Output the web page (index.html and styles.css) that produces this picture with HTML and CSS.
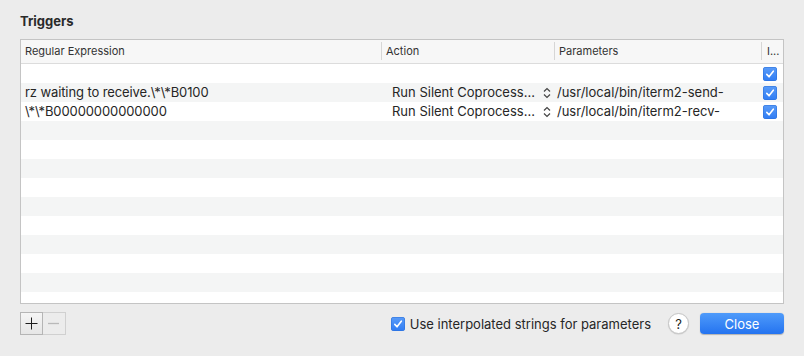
FILE: index.html
```html
<html><head><title>Triggers</title>
<link rel="stylesheet" href="styles.css">
</head>
<body>
  <div class="panel">
    <h1 class="title">Triggers</h1>
    <div class="table">
      <div class="head">
        <div class="cell c-regex">Regular Expression</div>
        <div class="cell c-action">Action</div>
        <div class="cell c-params">Parameters</div>
        <div class="cell c-inst">I...</div>
      </div>
      <div class="rows">
        <div class="row">
          <div class="cell c-regex"></div>
          <div class="cell c-action"></div>
          <div class="cell c-params"></div>
          <div class="cell c-inst"><span class="check"><svg viewBox="0 0 14 14"><path d="M3.8 7.4 L6 9.8 L10.3 4.2" /></svg></span></div>
        </div>
        <div class="row">
          <div class="cell c-regex">rz waiting to receive.\*\*B0100</div>
          <div class="cell c-action"><span class="pop">Run Silent Coprocess...</span><svg class="updown" viewBox="0 0 8 12"><path d="M1 4.5 L4 1.5 L7 4.5 M1 7.5 L4 10.5 L7 7.5" /></svg></div>
          <div class="cell c-params">/usr/local/bin/iterm2-send-</div>
          <div class="cell c-inst"><span class="check"><svg viewBox="0 0 14 14"><path d="M3.8 7.4 L6 9.8 L10.3 4.2" /></svg></span></div>
        </div>
        <div class="row">
          <div class="cell c-regex">\*\*B00000000000000</div>
          <div class="cell c-action"><span class="pop">Run Silent Coprocess...</span><svg class="updown" viewBox="0 0 8 12"><path d="M1 4.5 L4 1.5 L7 4.5 M1 7.5 L4 10.5 L7 7.5" /></svg></div>
          <div class="cell c-params">/usr/local/bin/iterm2-recv-</div>
          <div class="cell c-inst"><span class="check"><svg viewBox="0 0 14 14"><path d="M3.8 7.4 L6 9.8 L10.3 4.2" /></svg></span></div>
        </div>
      </div>
    </div>
    <div class="footer">
      <div class="segs">
        <button class="seg add" aria-label="Add"><svg viewBox="0 0 21 21"><path d="M4.5 10.5 H16.5 M10.5 4.5 V16.5" /></svg></button>
        <button class="seg remove" aria-label="Remove"><svg viewBox="0 0 21 21"><path d="M5 10.5 H16" /></svg></button>
      </div>
      <label class="option">
        <span class="check"><svg viewBox="0 0 14 14"><path d="M3.8 7.4 L6 9.8 L10.3 4.2" /></svg></span>
        Use interpolated strings for parameters
      </label>
      <button class="help">?</button>
      <button class="close">Close</button>
    </div>
  </div>
</body>
</html>
```

FILE: styles.css
```css
body, html {
  margin: 0;
  padding: 0;
  background: #ececec;
  font-family: Inter, Roboto, sans-serif;
  color: #262626;
  height: 100%;
  overflow: hidden;
}
.panel {
  padding: 12px 20px 0 20px;
}
.title {
  margin: 0;
  font-size: 13px;
  font-weight: 700;
  line-height: 18px;
  height: 27px;
  color: #2a2a2a;
}
.table {
  border: 1px solid #c4c4c4;
  background: #fff;
  height: 263px;
  overflow: hidden;
}
.head {
  display: flex;
  height: 23px;
  background: #f7f7f7;
  border-bottom: 1px solid #dcdcdc;
  font-size: 11px;
  line-height: 23px;
  color: #333;
}
.head .cell {
  position: relative;
}
.head .cell + .cell::before {
  content: "";
  position: absolute;
  left: 0;
  top: 2px;
  bottom: 3px;
  border-left: 1px solid #d6d6d6;
}
.cell {
  box-sizing: border-box;
  white-space: nowrap;
  overflow: hidden;
}
.c-regex { width: 360px; padding-left: 4px; }
.c-action { width: 173px; padding-left: 6px; }
.c-params { width: 207px; padding-left: 5px; }
.c-inst { flex: 1; padding-left: 5px; }
.head .c-action, .head .c-params { padding-left: 5px; }
.head .c-inst { padding-left: 6px; }
.rows {
  height: 239px;
  background: repeating-linear-gradient(#fff 0 19px, #f4f5f5 19px 38px);
}
.row {
  display: flex;
  height: 19px;
  line-height: 19px;
  font-size: 13px;
}
.row .c-regex { letter-spacing: -0.1px; }
.row .c-action {
  padding-left: 11px;
  display: flex;
  align-items: center;
}
.row .c-params { padding-left: 3px; }
.row .c-inst {
  padding-left: 2px;
  display: flex;
  align-items: center;
}
.pop {
  width: 150px;
}
.updown {
  width: 8px;
  height: 12px;
  margin-left: 1px;
  fill: none;
  stroke: #444;
  stroke-width: 1.2;
}
.check {
  display: inline-block;
  width: 14px;
  height: 14px;
  border-radius: 3px;
  background: linear-gradient(#5a9cf8, #2f7cf4);
  box-shadow: inset 0 0 0 0.5px #2a6fd8;
}
.check svg {
  display: block;
  width: 14px;
  height: 14px;
  fill: none;
  stroke: #fff;
  stroke-width: 1.6;
  stroke-linecap: round;
  stroke-linejoin: round;
}
.footer {
  display: flex;
  align-items: center;
  margin-top: 8px;
  height: 23px;
}
.segs {
  display: flex;
}
.seg {
  width: 23px;
  height: 23px;
  margin: 0;
  padding: 0;
  border: 1px solid #c2c2c2;
  background: #f2f2f2;
}
.seg svg {
  display: block;
  width: 21px;
  height: 21px;
  fill: none;
  stroke-width: 1;
}
.seg.add {
  background: linear-gradient(#f5f5f5, #e6e6e6);
  border-color: #b5b5b5;
}
.seg.add svg { stroke: #1e1e1e; }
.seg.remove {
  border-left: none;
  background: #ececec;
  border-color: #d0d0d0;
}
.seg.remove svg { stroke: #b9b9b9; stroke-width: 1.3; }
.option {
  display: flex;
  align-items: center;
  margin-left: auto;
  font-size: 13px;
  color: #262626;
}
.option .check {
  margin-right: 5px;
}
.help {
  width: 21px;
  height: 21px;
  border-radius: 50%;
  border: 1px solid #c6c6c6;
  background: #fff;
  font-family: Inter, sans-serif;
  font-size: 13px;
  padding: 0;
  margin-left: 17px;
  color: #222;
  box-shadow: 0 0.5px 1px rgba(0,0,0,0.15);
}
.close {
  width: 84px;
  height: 21px;
  margin-left: 11px;
  border: none;
  border-radius: 4px;
  background: linear-gradient(#4f9bfa, #2473f0);
  color: #fff;
  font-family: Inter, sans-serif;
  font-size: 13px;
  padding: 0;
  box-shadow: 0 0.5px 1px rgba(0,0,0,0.25);
}
```
